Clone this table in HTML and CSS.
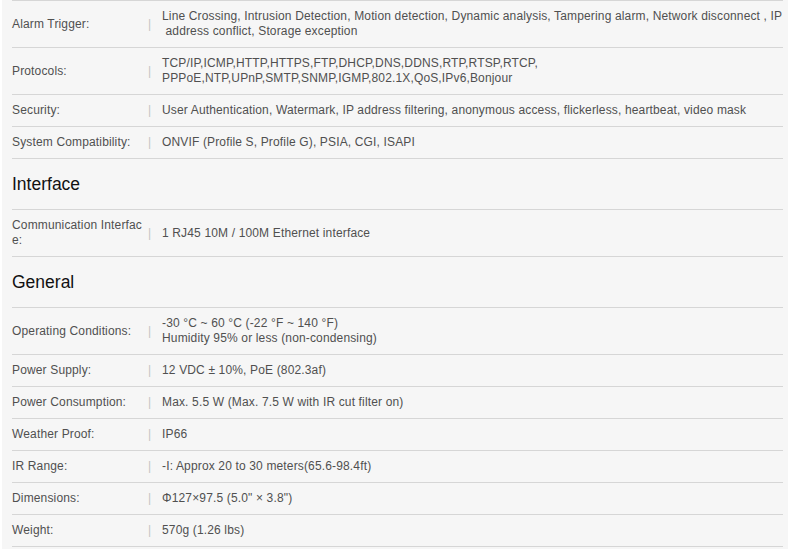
FILE: index.html
```html
<!DOCTYPE html>
<html>
<head>
<meta charset="utf-8">
<link rel="stylesheet" href="styles.css">
</head>
<body>
<div class="page">
  <div class="specs">
    <div class="row"><div class="label">Alarm Trigger:</div><div class="sep">|</div><div class="value">Line Crossing, Intrusion Detection, Motion detection, Dynamic analysis, Tampering alarm, Network disconnect , IP<br>&nbsp;address conflict, Storage exception</div></div>
    <div class="row"><div class="label">Protocols:</div><div class="sep">|</div><div class="value">TCP/IP,ICMP,HTTP,HTTPS,FTP,DHCP,DNS,DDNS,RTP,RTSP,RTCP,<br>PPPoE,NTP,UPnP,SMTP,SNMP,IGMP,802.1X,QoS,IPv6,Bonjour</div></div>
    <div class="row"><div class="label">Security:</div><div class="sep">|</div><div class="value">User Authentication, Watermark, IP address filtering, anonymous access, flickerless, heartbeat, video mask</div></div>
    <div class="row"><div class="label">System Compatibility:</div><div class="sep">|</div><div class="value">ONVIF (Profile S, Profile G), PSIA, CGI, ISAPI</div></div>
  </div>
  <h2 class="heading">Interface</h2>
  <div class="specs">
    <div class="row"><div class="label">Communication Interface:</div><div class="sep">|</div><div class="value">1 RJ45 10M / 100M Ethernet interface</div></div>
  </div>
  <h2 class="heading">General</h2>
  <div class="specs">
    <div class="row"><div class="label">Operating Conditions:</div><div class="sep">|</div><div class="value">-30 °C ~ 60 °C (-22 °F ~ 140 °F)<br>Humidity 95% or less (non-condensing)</div></div>
    <div class="row"><div class="label">Power Supply:</div><div class="sep">|</div><div class="value">12 VDC ± 10%, PoE (802.3af)</div></div>
    <div class="row"><div class="label">Power Consumption:</div><div class="sep">|</div><div class="value">Max. 5.5 W (Max. 7.5 W with IR cut filter on)</div></div>
    <div class="row"><div class="label">Weather Proof:</div><div class="sep">|</div><div class="value">IP66</div></div>
    <div class="row"><div class="label">IR Range:</div><div class="sep">|</div><div class="value">-I: Approx 20 to 30 meters(65.6-98.4ft)</div></div>
    <div class="row"><div class="label">Dimensions:</div><div class="sep">|</div><div class="value">Φ127×97.5 (5.0" × 3.8")</div></div>
    <div class="row"><div class="label">Weight:</div><div class="sep">|</div><div class="value">570g (1.26 lbs)</div></div>
  </div>
</div>
</body>
</html>
```
FILE: styles.css
```css
html, body {
  margin: 0;
  padding: 0;
  background: #ffffff;
}
body {
  font-family: "Liberation Sans", Arial, sans-serif;
  font-size: 12px;
  letter-spacing: 0.15px;
  color: #505050;
}
.page {
  margin-left: 2px;
  background: #f6f6f6;
  padding: 0 5px 10px 10px;
  min-height: 549px;
  box-sizing: border-box;
}
.specs {
  border-top: 1px solid #d6d6d6;
}
.row {
  display: grid;
  grid-template-columns: 136px 14px 1fr;
  align-items: center;
  padding: 8px 0;
  line-height: 15px;
  border-bottom: 1px solid #d6d6d6;
  min-height: 15px;
}
.row .label {
  padding-right: 4px;
  word-break: break-all;
}
.row .sep {
  color: #c4c4c4;
}
.heading {
  margin: 0;
  font-weight: normal;
  font-size: 17.5px;
  letter-spacing: 0;
  line-height: 20px;
  color: #111111;
  padding: 15px 0 15px 0;
}
```
